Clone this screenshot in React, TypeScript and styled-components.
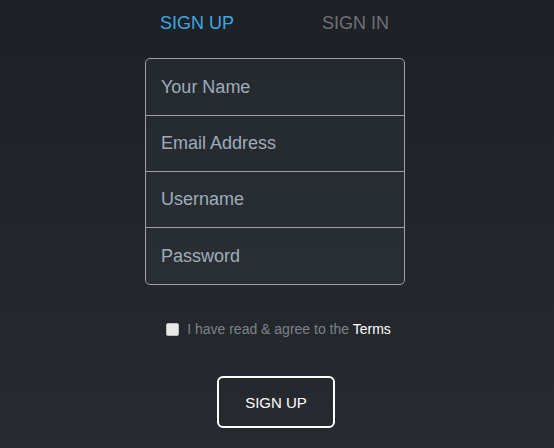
import React from "react";
import styled, { createGlobalStyle } from "styled-components";

const Global = createGlobalStyle`
  html, body { margin: 0; padding: 0; height: 100%; }
  body {
    background: linear-gradient(180deg, #1d2024 0%, #272a30 100%);
    font-family: "Liberation Sans", Arial, sans-serif;
    min-height: 448px;
  }
`;

const Page = styled.div`
  width: 554px;
  height: 448px;
  box-sizing: border-box;
  padding-right: 4px;
  display: flex;
  justify-content: center;
`;

const Column = styled.div`
  width: 260px;
  display: flex;
  flex-direction: column;
  padding-top: 12px;
`;

const Tabs = styled.div`
  display: flex;
  padding-left: 15px;
  gap: 88px;
`;

const Tab = styled.span<{ $active?: boolean }>`
  font-size: 18px;
  line-height: 22px;
  color: ${(p) => (p.$active ? "#3da8e2" : "#6e7278")};
`;

const Fields = styled.div`
  margin-top: 24px;
  border: 1px solid #9ea2a7;
  border-radius: 5px;
  background: rgba(130, 150, 175, 0.07);
  display: flex;
  flex-direction: column;
  overflow: hidden;
`;

const Field = styled.input`
  height: 56px;
  box-sizing: border-box;
  border: none;
  border-top: 1px solid #9ea2a7;
  background: transparent;
  padding: 0 15px;
  font-family: "Liberation Sans", Arial, sans-serif;
  font-size: 18px;
  color: #a7b3bf;
  outline: none;
  &:first-child { border-top: none; }
  &:last-child { height: 57px; }
  &::placeholder { color: #9eacba; }
`;

const Agree = styled.label`
  margin-top: 34px;
  height: 20px;
  display: flex;
  align-items: center;
  justify-content: center;
  gap: 8px;
  font-size: 14px;
  color: #7d8288;
  padding-left: 7px;
`;

const Check = styled.span`
  width: 11px;
  height: 11px;
  border: 1px solid #bdbdbd;
  border-radius: 2px;
  background: #e9e9e9;
  flex: none;
`;

const Terms = styled.span`
  color: #ffffff;
`;

const Button = styled.button`
  margin: 37px 0 0 72px;
  align-self: flex-start;
  width: 118px;
  height: 52px;
  box-sizing: border-box;
  border: 2px solid #ffffff;
  border-radius: 6px;
  background: transparent;
  color: #ffffff;
  font-family: "Liberation Sans", Arial, sans-serif;
  font-size: 15px;
  cursor: pointer;
`;

export default function App() {
  return (
    <Page>
      <Global />
      <Column>
        <Tabs>
          <Tab $active>SIGN UP</Tab>
          <Tab>SIGN IN</Tab>
        </Tabs>
        <Fields>
          <Field placeholder="Your Name" />
          <Field placeholder="Email Address" />
          <Field placeholder="Username" />
          <Field placeholder="Password" type="password" />
        </Fields>
        <Agree>
          <Check />
          <span>
            I have read &amp; agree to the <Terms>Terms</Terms>
          </span>
        </Agree>
        <Button>SIGN UP</Button>
      </Column>
    </Page>
  );
}
